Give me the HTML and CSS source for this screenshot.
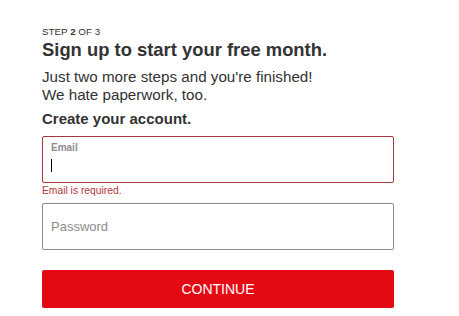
FILE: index.html
```html
<!DOCTYPE html>
<html lang="en">
<head>
<meta charset="utf-8">
<title>Sign up</title>
<link rel="stylesheet" href="styles.css">
</head>
<body>
<main class="page">
  <div class="step">STEP <b>2</b> OF 3</div>
  <h1 class="title">Sign up to start your free month.</h1>
  <p class="intro">Just two more steps and you're finished!<br>We hate paperwork, too.</p>
  <h2 class="subtitle">Create your account.</h2>
  <form class="form">
    <div class="field field-error">
      <label class="field-label">Email</label>
      <span class="caret"></span>
    </div>
    <div class="error-msg">Email is required.</div>
    <div class="field field-plain">
      <span class="placeholder">Password</span>
    </div>
    <button type="button" class="btn">CONTINUE</button>
  </form>
</main>
</body>
</html>
```
FILE: styles.css
```css
html, body {
  margin: 0;
  padding: 0;
  background: #fff;
}
body {
  font-family: "Liberation Sans", Arial, sans-serif;
  color: #333;
}
.page {
  width: 352px;
  margin-left: 42px;
  padding-top: 26px;
  display: flex;
  flex-direction: column;
}
.step {
  font-size: 9.8px;
  line-height: 12px;
  color: #333;
}
.step b {
  font-weight: bold;
}
.title {
  margin: 1px 0 0;
  font-size: 18.4px;
  line-height: 22px;
  font-weight: bold;
  color: #333;
}
.intro {
  margin: 7px 0 0;
  font-size: 15.2px;
  line-height: 18px;
  color: #333;
}
.subtitle {
  margin: 6px 0 0;
  font-size: 15px;
  line-height: 18px;
  font-weight: bold;
  color: #333;
}
.form {
  margin-top: 8px;
  display: flex;
  flex-direction: column;
}
.field {
  box-sizing: border-box;
  height: 47px;
  border: 1px solid #8c8c8c;
  border-radius: 2px;
  padding: 0 8px;
  display: flex;
  flex-direction: column;
}
.field-error {
  border-color: #a8363b;
  padding-top: 5px;
}
.field-label {
  font-size: 10px;
  line-height: 12px;
  font-weight: bold;
  color: #8c8c8c;
}
.caret {
  margin-top: 5px;
  width: 1px;
  height: 13px;
  background: #000;
}
.error-msg {
  font-size: 10.3px;
  line-height: 13px;
  color: #b5353a;
  margin-top: 1px;
}
.field-plain {
  margin-top: 6px;
  justify-content: center;
}
.placeholder {
  font-size: 13px;
  line-height: 16px;
  color: #8c8c8c;
}
.btn {
  margin-top: 20px;
  height: 38px;
  border: 0;
  border-radius: 2px;
  background: #e50914;
  color: #fff;
  font-family: "Liberation Sans", Arial, sans-serif;
  font-size: 14px;
  padding: 0;
}
```
